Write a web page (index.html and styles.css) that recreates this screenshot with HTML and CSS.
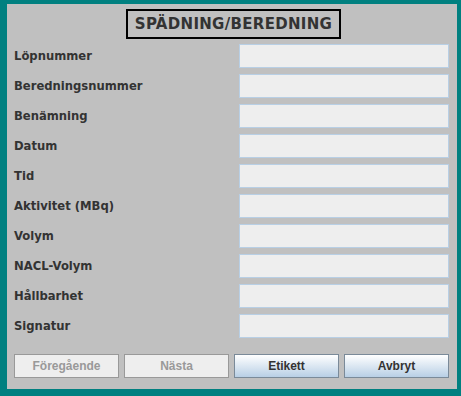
FILE: index.html
```html
<!DOCTYPE html>
<html lang="sv">
<head>
    <meta charset="UTF-8">
    <title>Spädning/Beredning</title>
    <link rel="stylesheet" href="styles.css">
</head>
<body>
    <div class="panel">
        <div class="title-wrap">
            <h1 class="title">SPÄDNING/BEREDNING</h1>
        </div>

        <form class="fields">
            <div class="row"><label>Löpnummer</label><input type="text"></div>
            <div class="row"><label>Beredningsnummer</label><input type="text"></div>
            <div class="row"><label>Benämning</label><input type="text"></div>
            <div class="row"><label>Datum</label><input type="text"></div>
            <div class="row"><label>Tid</label><input type="text"></div>
            <div class="row"><label>Aktivitet (MBq)</label><input type="text"></div>
            <div class="row"><label>Volym</label><input type="text"></div>
            <div class="row"><label>NACL-Volym</label><input type="text"></div>
            <div class="row"><label>Hållbarhet</label><input type="text"></div>
            <div class="row"><label>Signatur</label><input type="text"></div>
        </form>

        <!-- knappar -->
        <div class="buttons">
            <button class="btn" disabled>Föregående</button>
            <button class="btn" disabled>Nästa</button>
            <button class="btn">Etikett</button>
            <button class="btn">Avbryt</button>
        </div>
    </div>
</body>
</html>
```

FILE: styles.css
```css
* {
    margin: 0;
    padding: 0;
    box-sizing: border-box;
}

body {
    background: #008080;
    font-family: "DejaVu Sans", Verdana, sans-serif;
    color: #333;
}

.panel {
    background: #c0c0c0;
    width: 450px;
    height: 385px;
    margin: 4px 0 0 7px;
    display: flex;
    flex-direction: column;
}

.title-wrap {
    display: flex;
    justify-content: center;
    margin-top: 5px;
    padding-left: 3px;
}

.title {
    border: 2px solid #000;
    height: 30px;
    width: 215px;
    font-size: 15px;
    font-weight: bold;
    color: #333;
    display: flex;
    align-items: center;
    justify-content: center;
    letter-spacing: 0.3px;
}

.fields {
    margin-top: 5px;
    display: flex;
    flex-direction: column;
    gap: 6px;
}

.row {
    display: flex;
    justify-content: space-between;
    align-items: center;
    height: 24px;
    padding: 0 8px 0 7px;
}

.row label {
    font-size: 11.6px;
    font-weight: bold;
    color: #333;
}

.row input {
    width: 210px;
    height: 24px;
    background: #eeeeee;
    border: 1px solid #b8cfe5;
    outline: none;
}

.buttons {
    margin-top: 16px;
    padding: 0 8px 0 7px;
    display: flex;
    gap: 5px;
}

.btn {
    width: 105px;
    height: 24px;
    font-family: "Liberation Sans", Arial, sans-serif;
    font-size: 12px;
    font-weight: bold;
    color: #333;
    border: 1px solid #7a8a99;
    background: linear-gradient(#ffffff, #b8cfe5);
}

.btn:disabled {
    background: #eeeeee;
    border-color: #999;
    color: #999;
}
```
